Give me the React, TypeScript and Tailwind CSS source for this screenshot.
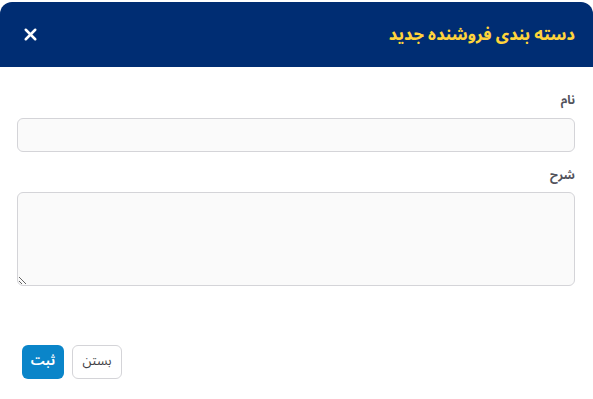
import { X } from 'lucide-react';

export default function App() {
  return (
    <div dir="rtl" className="w-[593px] h-[399px] bg-white pt-[2px] overflow-hidden" style={{ fontFamily: '"Noto Sans Arabic", "Noto Naskh Arabic", "Vazirmatn", "DejaVu Sans", sans-serif' }}>
      {/* Header */}
      <div className="h-[65px] bg-[#002d73] rounded-t-[12px] flex items-center justify-between pr-[18px] pl-[21px]">
        <h1 className="text-[16px] font-extrabold text-[#ffd43b]">دسته بندی فروشنده جدید</h1>
        <button className="text-white">
          <X className="w-[19px] h-[19px]" strokeWidth={3.2} />
        </button>
      </div>

      {/* Body */}
      <div className="pr-[18px] pl-[17px] pt-[25px]">
        <label className="block text-[12px] font-bold text-[#52525b] mb-[8px]">نام</label>
        <input className="block w-full h-[34px] rounded-[6px] border border-[#d4d4d8] bg-[#fafafa]" />

        <label className="block text-[12px] font-bold text-[#52525b] mt-[15px] mb-[7px]">شرح</label>
        <textarea className="block w-full h-[94px] rounded-[6px] border border-[#d4d4d8] bg-[#fafafa]" />
      </div>

      {/* Footer */}
      <div className="flex justify-start gap-[8px] pl-[22px] mt-[59px]" dir="ltr">
        <button className="h-[34px] w-[42px] rounded-[6px] bg-[#0a85c9] text-white text-[13px] font-bold">ثبت</button>
        <button className="h-[34px] w-[50px] rounded-[6px] border border-[#d4d4d8] bg-white text-[#3f3f46] text-[13px]">بستن</button>
      </div>
    </div>
  );
}
